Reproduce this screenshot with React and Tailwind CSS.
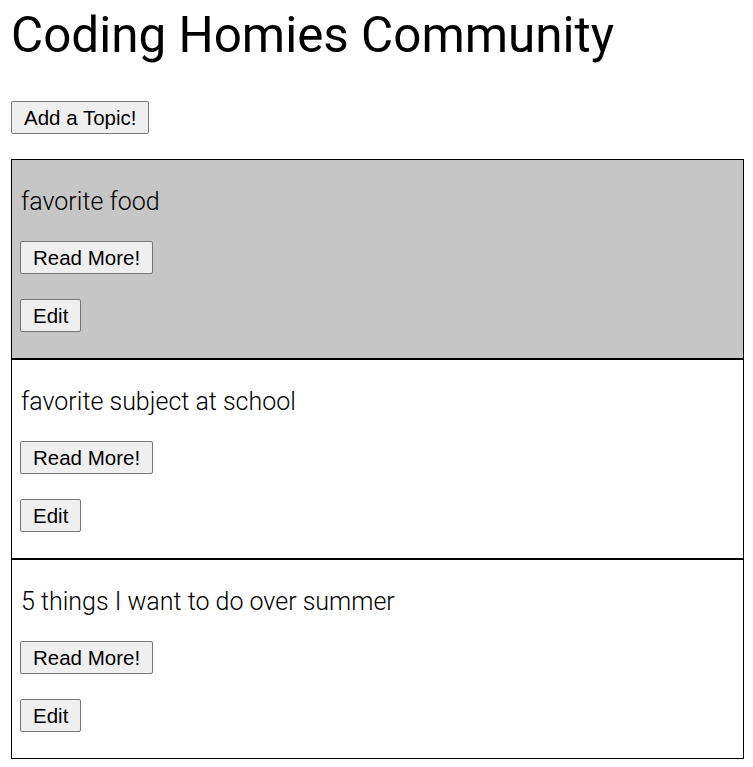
export default function App() {
  const topics = [
    { title: "favorite food", bg: "bg-[#c6c6c6]" },
    { title: "favorite subject at school", bg: "bg-white" },
    { title: "5 things I want to do over summer", bg: "bg-white" },
  ];
  const btn =
    "h-[33px] px-[12px] rounded-[2px] border border-[#767676] bg-[#efefef] text-black text-[20.5px] leading-[23px] [font-family:'Liberation_Sans',Arial,sans-serif]";
  return (
    <div className="min-h-[767px] bg-white text-black pl-[11px] pt-[7px] [font-family:Roboto,sans-serif]">
      <h1 className="text-[49.4px] leading-[57px] font-normal m-0">Coding Homies Community</h1>
      <div className="mt-[37px]">
        <button className={btn}>Add a Topic!</button>
      </div>
      <div className="mt-[25px] w-[733px] flex flex-col">
        {topics.map((t) => (
          <div key={t.title} className={`h-[200px] border border-black ${t.bg} pl-[8px] pt-[28px] flex flex-col items-start`}>
            <p className="text-[25px] leading-[28px] font-light m-0 ml-[1px]">{t.title}</p>
            <button className={`${btn} mt-[25px]`}>Read More!</button>
            <button className={`${btn} mt-[25px]`}>Edit</button>
          </div>
        ))}
      </div>
    </div>
  );
}
